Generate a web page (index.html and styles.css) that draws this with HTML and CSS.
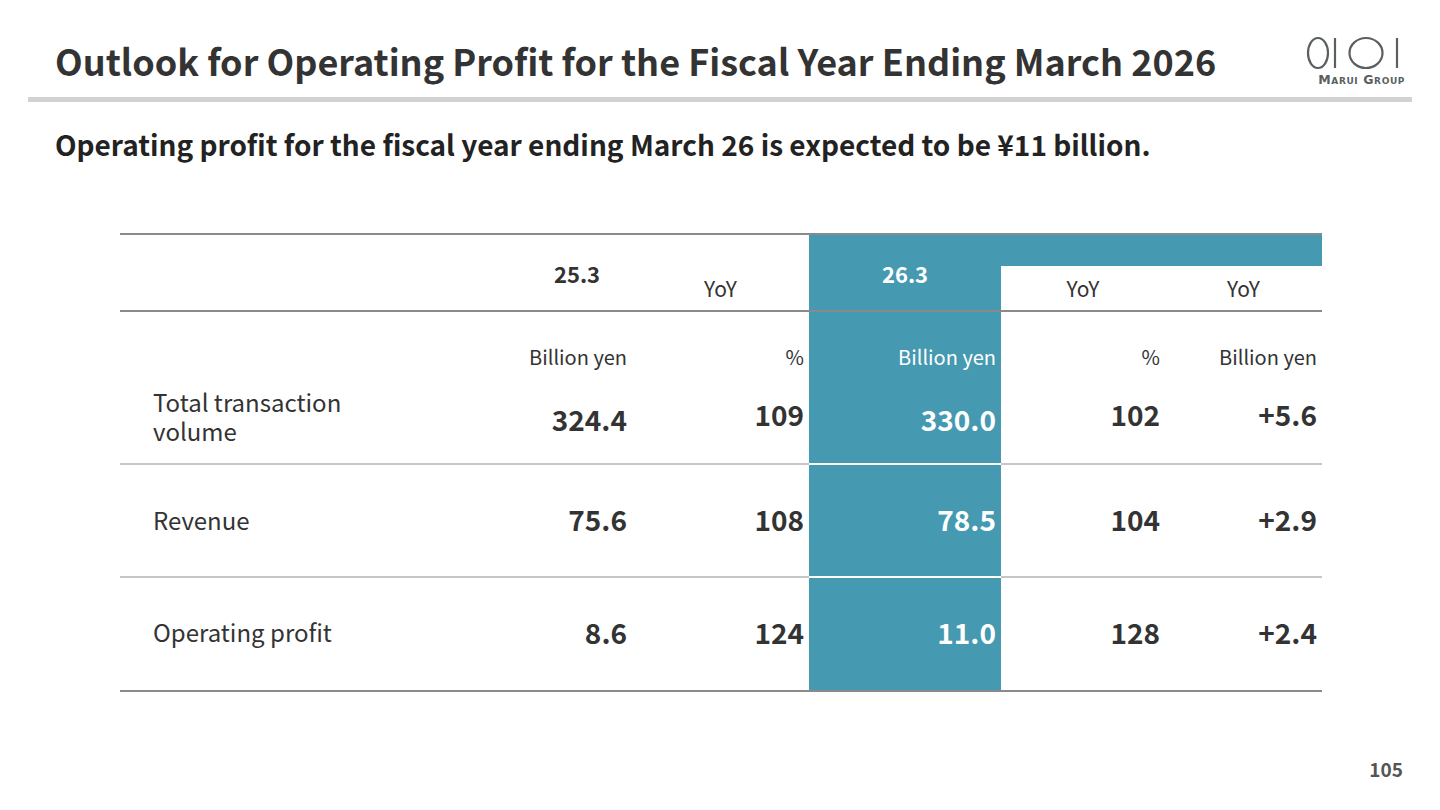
FILE: index.html
```html
<!DOCTYPE html>
<html lang="en">
<head>
<meta charset="utf-8">
<title>Outlook for Operating Profit</title>
<link rel="stylesheet" href="styles.css">
</head>
<body>
<div class="page">
  <header class="header">
    <h1 class="title">Outlook for Operating Profit for the Fiscal Year Ending March 2026</h1>
    <div class="logo">
      <svg class="logo-mark" width="100" height="34" viewBox="0 0 100 34">
        <ellipse cx="13" cy="17" rx="10" ry="15" fill="none" stroke="#5a5f5f" stroke-width="2.2"/>
        <line x1="30" y1="2" x2="30" y2="32" stroke="#5a5f5f" stroke-width="2.2"/>
        <ellipse cx="61" cy="17" rx="16.5" ry="15" fill="none" stroke="#5a5f5f" stroke-width="2.2"/>
        <line x1="92" y1="2" x2="92" y2="32" stroke="#5a5f5f" stroke-width="2.2"/>
      </svg>
      <div class="logo-text">Marui Group</div>
    </div>
  </header>
  <div class="rule"></div>
  <p class="lead">Operating profit for the fiscal year ending March 26 is expected to be ¥11 billion.</p>

  <div class="table">
    <div class="row head">
      <div class="cell"></div>
      <div class="cell h-year">25.3</div>
      <div class="cell h-yoy">YoY</div>
      <div class="cell teal h-year">26.3</div>
      <div class="cell band h-yoy">YoY</div>
      <div class="cell band h-yoy">YoY</div>
    </div>
    <div class="row units">
      <div class="cell"></div>
      <div class="cell num">Billion yen</div>
      <div class="cell num">%</div>
      <div class="cell teal num">Billion yen</div>
      <div class="cell num">%</div>
      <div class="cell num">Billion yen</div>
    </div>
    <div class="row data first">
      <div class="cell label"><p class="wrap">Total transaction volume</p></div>
      <div class="cell num val low">324.4</div>
      <div class="cell num val">109</div>
      <div class="cell teal num val low">330.0</div>
      <div class="cell num val">102</div>
      <div class="cell num val">+5.6</div>
    </div>
    <div class="row data mid">
      <div class="cell label">Revenue</div>
      <div class="cell num val">75.6</div>
      <div class="cell num val">108</div>
      <div class="cell teal num val">78.5</div>
      <div class="cell num val">104</div>
      <div class="cell num val">+2.9</div>
    </div>
    <div class="row data last">
      <div class="cell label">Operating profit</div>
      <div class="cell num val">8.6</div>
      <div class="cell num val">124</div>
      <div class="cell teal num val">11.0</div>
      <div class="cell num val">128</div>
      <div class="cell num val">+2.4</div>
    </div>
  </div>

  <div class="footer">
    <span class="page-no">105</span>
  </div>
</div>
</body>
</html>
```
FILE: styles.css
```css
* { box-sizing: border-box; margin: 0; padding: 0; }

html, body {
  width: 1440px;
  height: 810px;
  background: #ffffff;
  overflow: hidden;
}

body {
  font-family: "Noto Sans CJK JP", "Noto Sans", sans-serif;
  color: #333333;
}

.page {
  width: 1440px;
  height: 810px;
  display: flex;
  flex-direction: column;
}

.header {
  display: flex;
  justify-content: space-between;
  align-items: flex-start;
  padding: 0 35px 0 55px;
  height: 97px;
}

.title {
  font-size: 36px;
  font-weight: 700;
  line-height: 40px;
  margin-top: 40px;
  color: #333333;
}

.logo {
  margin-top: 36px;
  width: 100px;
  display: flex;
  flex-direction: column;
  align-items: flex-end;
}

.logo-mark { display: block; margin-left: 8px; }

.logo-text {
  font-family: "DejaVu Sans", sans-serif;
  font-variant: small-caps;
  font-weight: 700;
  font-size: 12.5px;
  line-height: 12px;
  letter-spacing: 0.6px;
  color: #5a5f5f;
  margin-top: 4px;
}

.rule {
  height: 5px;
  margin: 0 28px;
  background: #d2d2d2;
}

.lead {
  font-size: 28px;
  font-weight: 700;
  line-height: 32px;
  margin: 26px 0 0 55px;
  color: #222222;
}

.table {
  margin: 73px 0 0 120px;
  width: 1202px;
  border-top: 2px solid #8a8a8a;
}

.row {
  display: grid;
  grid-template-columns: 402px 110px 177px 192px 164px 157px;
}

.cell {
  font-size: 20px;
  line-height: 24px;
}

.teal {
  background: #4599b1;
  color: #ffffff;
}

/* header row */
.head .cell {
  height: 77px;
  border-bottom: 2px solid #8a8a8a;
  text-align: center;
}
.h-year {
  font-weight: 700;
  font-size: 22px;
  padding-top: 26px;
}
.h-yoy {
  font-size: 21px;
  padding-top: 41px;
}
.head .band {
  border-top: 31px solid #4599b1;
  padding-top: 10px;
}

/* units row */
.units .cell {
  height: 67px;
  display: flex;
  align-items: flex-end;
  justify-content: flex-end;
  padding: 0 5px 10px 0;
  font-size: 20px;
}

/* data rows */
.data .cell {
  height: 113px;
  display: flex;
  align-items: center;
  border-bottom: 2px solid #c6c6c6;
}
.data .teal { border-bottom-color: #ffffff; }
.data.first .cell { height: 86px; }
.data.last .cell {
  height: 114px;
  border-bottom: 2px solid #8a8a8a;
}

.label {
  padding-left: 33px;
  font-size: 24px;
  line-height: 29px;
}
.first .label { padding-bottom: 10px; }
.wrap {
  width: 210px;
  line-height: 29px;
}

.num {
  justify-content: flex-end;
  text-align: right;
  padding-right: 5px;
}

.val {
  font-size: 28px;
  font-weight: 700;
  line-height: 32px;
}

.first .val { padding-bottom: 14px; }
.first .val.low { padding-bottom: 4px; }
.mid .val, .mid .label { padding-bottom: 3px; }
.last .val, .last .label { padding-bottom: 5px; }

.footer {
  margin-top: auto;
  display: flex;
  justify-content: flex-end;
  padding: 0 37px 31px 0;
}

.page-no {
  font-size: 19px;
  font-weight: 700;
  line-height: 20px;
  color: #555555;
}
```
